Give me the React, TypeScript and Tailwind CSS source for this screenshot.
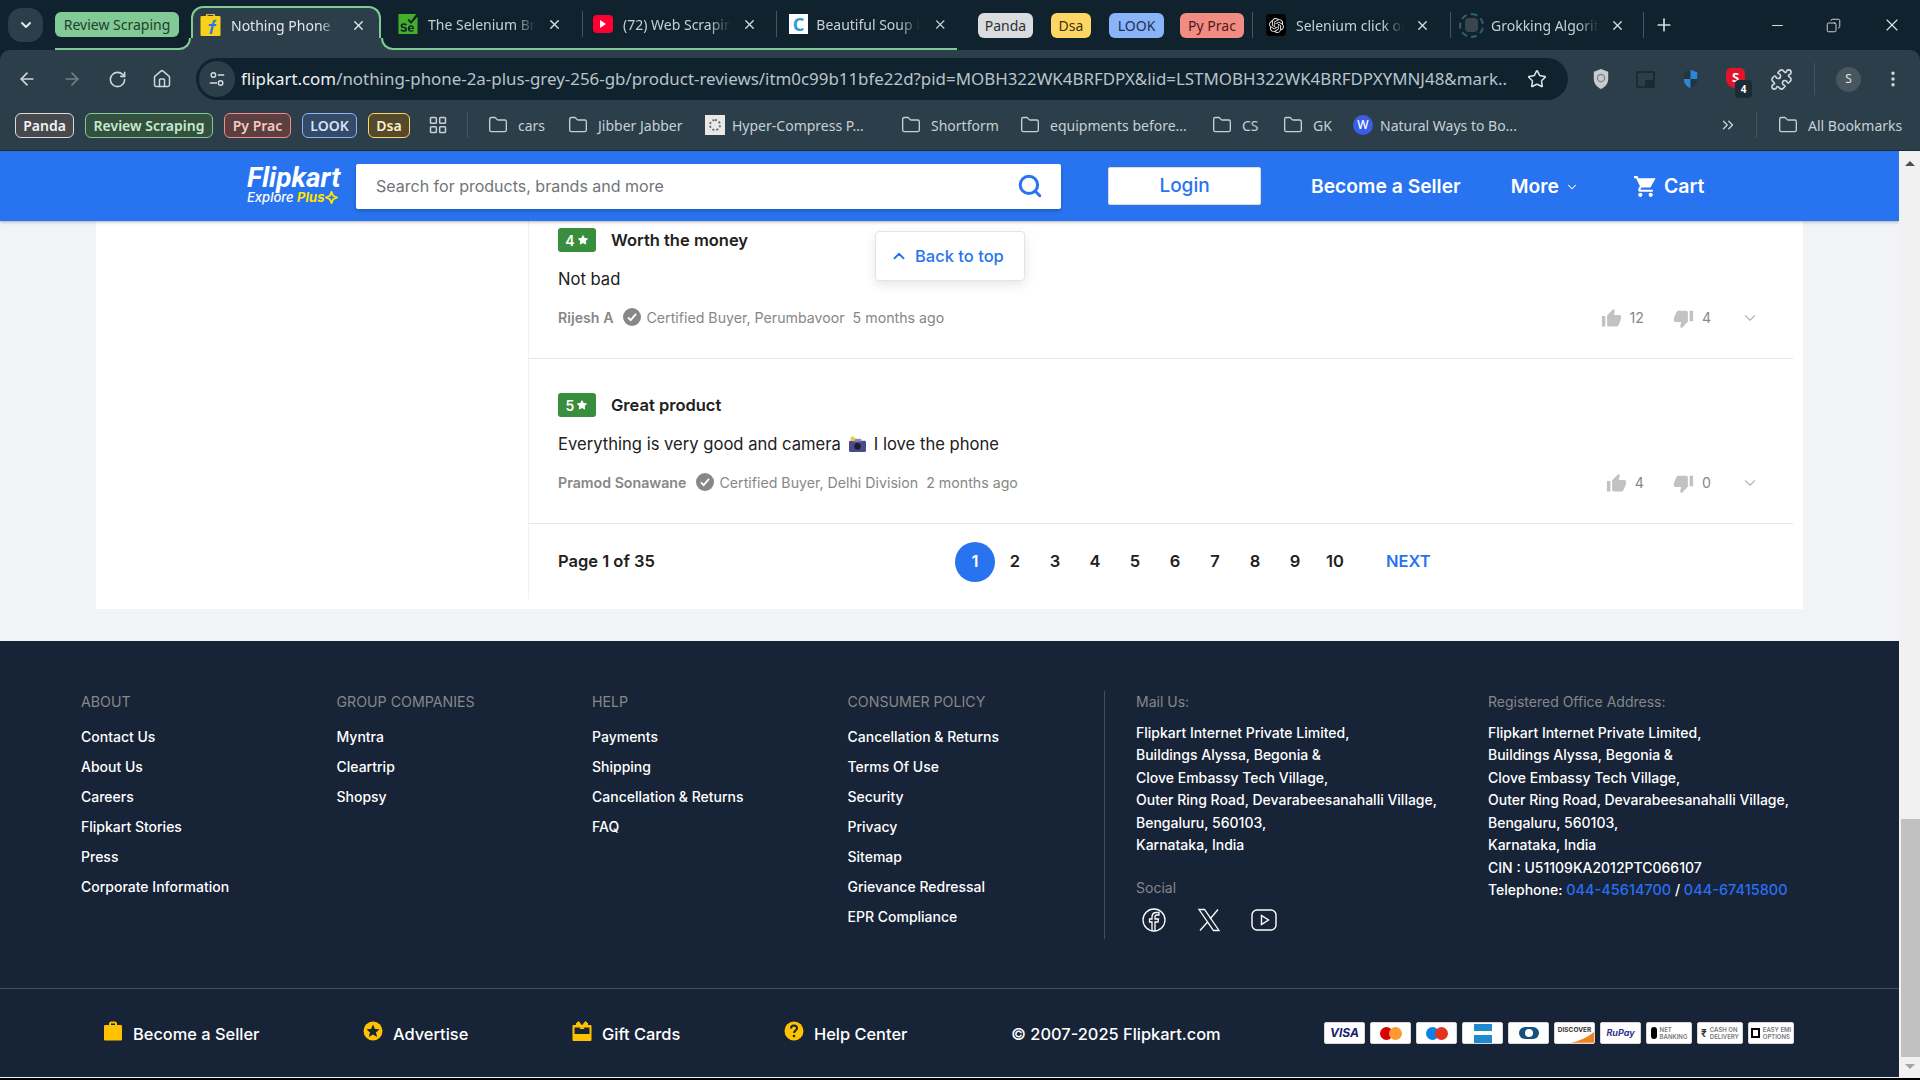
import {
  ArrowLeft,
  ArrowRight,
  ChevronDown,
  ChevronUp,
  ChevronsRight,
  Copy,
  EllipsisVertical,
  Folder,
  House,
  LayoutGrid,
  Minus,
  Plus,
  Puzzle,
  RotateCw,
  Search,
  Star,
  X,
} from 'lucide-react';
import { SiOpenai, SiSelenium } from 'react-icons/si';
import type { ReactNode } from 'react';

const aboutLinks = ['Contact Us', 'About Us', 'Careers', 'Flipkart Stories', 'Press', 'Corporate Information'];
const groupLinks = ['Myntra', 'Cleartrip', 'Shopsy'];
const helpLinks = ['Payments', 'Shipping', 'Cancellation & Returns', 'FAQ'];
const policyLinks = ['Cancellation & Returns', 'Terms Of Use', 'Security', 'Privacy', 'Sitemap', 'Grievance Redressal', 'EPR Compliance'];
const addressLines = [
  'Flipkart Internet Private Limited,',
  'Buildings Alyssa, Begonia &',
  'Clove Embassy Tech Village,',
  'Outer Ring Road, Devarabeesanahalli Village,',
  'Bengaluru, 560103,',
  'Karnataka, India',
];

function Tab({ icon, title, width }: { icon: ReactNode; title: string; width: string }) {
  return (
    <div className={`flex items-center h-[34px] shrink-0 pl-[10px] ${width}`}>
      <span className="w-5 h-5 shrink-0 flex items-center justify-center">{icon}</span>
      <span className="ml-[10px] w-[108px] overflow-hidden whitespace-nowrap text-[14px] text-[#c7d0d6] [mask-image:linear-gradient(90deg,#000_80%,transparent)]">
        {title}
      </span>
      <X size={15} strokeWidth={2.2} className="ml-[11px] text-[#d5dce0]" />
      <span className="ml-auto h-[26px] w-px bg-[#45545f]" />
    </div>
  );
}

function GroupChip({ label, className }: { label: string; className: string }) {
  return (
    <span className={`h-[25px] flex items-center justify-center rounded-md text-[14px] shrink-0 ${className}`}>{label}</span>
  );
}

function BookmarkChip({ label, className }: { label: string; className: string }) {
  return (
    <span className={`h-[25px] flex items-center justify-center rounded-md border text-[14px] font-semibold shrink-0 ${className}`}>
      {label}
    </span>
  );
}

function FolderMark({ label, className }: { label: string; className: string }) {
  return (
    <div className={`flex items-center shrink-0 ${className}`}>
      <Folder size={20} strokeWidth={1.6} className="text-[#c7d0d6]" />
      <span className="ml-[10px] text-[14px] text-[#c7d0d6] whitespace-nowrap">{label}</span>
    </div>
  );
}

function ThumbUp() {
  return (
    <svg viewBox="0 0 24 24" className="w-[21px] h-[21px] fill-[#c2c2c2]">
      <path d="M1 21h4V9H1v12zm22-11c0-1.1-.9-2-2-2h-6.31l.95-4.57.03-.32c0-.41-.17-.79-.44-1.06L14.17 1 7.59 7.59C7.22 7.95 7 8.45 7 9v10c0 1.1.9 2 2 2h9c.83 0 1.54-.5 1.84-1.22l3.02-7.05c.09-.23.14-.47.14-.73v-2z" />
    </svg>
  );
}

function ThumbDown() {
  return (
    <svg viewBox="0 0 24 24" className="w-[21px] h-[21px] fill-[#c2c2c2]">
      <path d="M15 3H6c-.83 0-1.54.5-1.84 1.22l-3.02 7.05c-.09.23-.14.47-.14.73v2c0 1.1.9 2 2 2h6.31l-.95 4.57-.03.32c0 .41.17.79.44 1.06L9.83 23l6.59-6.59c.36-.36.58-.86.58-1.41V5c0-1.1-.9-2-2-2zm4 0v12h4V3h-4z" />
    </svg>
  );
}

function Review({
  rating,
  title,
  body,
  author,
  place,
  ago,
  up,
  down,
}: {
  rating: number;
  title: string;
  body: ReactNode;
  author: string;
  place: string;
  ago: string;
  up: number;
  down: number;
}) {
  return (
    <div className="pl-[29px] pr-[34px] border-b border-[#e8e8e8]">
      <div className="flex items-center h-6">
        <span className="w-[38px] h-6 bg-[#388e3c] rounded-[3px] text-white text-[14px] font-semibold flex items-center justify-center gap-[2px]">
          {rating}
          <Star size={12} fill="white" strokeWidth={0} />
        </span>
        <span className="ml-[15px] text-[16.5px] font-semibold text-[#212121]">{title}</span>
      </div>
      <div className="mt-[15px] h-6 flex items-center text-[16.6px] text-[#212121]">{body}</div>
      <div className="mt-[17px] h-5 flex items-center text-[14.2px] text-[#878787]">
        <span className="font-semibold">{author}</span>
        <svg viewBox="0 0 20 20" className="w-[18px] h-[18px] ml-[10px] mb-[3px]">
          <circle cx="10" cy="10" r="10" fill="#878787" />
          <path d="M5.5 10.5l3 3 6-7" fill="none" stroke="white" strokeWidth="2" />
        </svg>
        <span className="ml-[5px]">Certified Buyer, {place}</span>
        <span className="ml-2">{ago}</span>
        <div className="ml-auto flex items-center">
          <ThumbUp />
          <span className="ml-[8px] mr-[29px]">{up}</span>
          <ThumbDown />
          <span className="ml-[8px] w-[39px]">{down}</span>
          <ChevronDown size={18} strokeWidth={1.5} className="text-[#b5b5b5]" />
        </div>
      </div>
      <div className="h-[30px]" />
    </div>
  );
}

function LinkColumn({ heading, links }: { heading: string; links: string[] }) {
  return (
    <div>
      <div className="h-5 text-[14.2px] leading-5 text-[#878787] mb-[15px]">{heading}</div>
      {links.map((l) => (
        <div key={l} className="h-5 mb-[10px] text-[14px] leading-5 font-medium text-white">
          {l}
        </div>
      ))}
    </div>
  );
}

function PayCard({ children, className = 'w-[41px]' }: { children: ReactNode; className?: string }) {
  return (
    <div className={`relative h-[22px] bg-white rounded-[2px] border border-[#d8d8d8] flex items-center justify-center overflow-hidden shrink-0 ${className}`}>
      {children}
    </div>
  );
}

function PayText({ icon, top, bottom }: { icon: ReactNode; top: string; bottom: string }) {
  return (
    <PayCard className="w-[46px]">
      {icon}
      <span className="ml-[3px] text-[6px] leading-[7px] font-semibold text-[#777]">
        {top}
        <br />
        {bottom}
      </span>
    </PayCard>
  );
}

function BottomItem({ icon, label, className }: { icon: ReactNode; label: string; className: string }) {
  return (
    <div className={`flex items-center shrink-0 ${className}`}>
      <span className="w-5 h-5 mb-[3px] flex items-center justify-center">{icon}</span>
      <span className="ml-[10px] pt-[2px] text-[16.4px] font-medium text-white">{label}</span>
    </div>
  );
}

export default function App() {
  return (
    <div className="w-[1920px] h-screen overflow-hidden bg-black flex flex-col font-['Inter',sans-serif]">
      {/* browser tab strip */}
      <div className="h-[50px] bg-[#10222e] flex items-center pl-2 shrink-0 font-['Noto_Sans',sans-serif]">
        <span className="w-[35px] h-[34px] rounded-[14px] bg-[#2c3e4a] flex items-center justify-center">
          <ChevronDown size={16} strokeWidth={3} className="text-[#e3e8eb]" />
        </span>
        <div className="ml-3 w-[902px] h-full flex items-center border-b-2 border-[#81c995] shrink-0">
          <GroupChip label="Review Scraping" className="w-[124px] bg-[#81c995] text-[#23402c]" />
          <div className="relative ml-[12px] h-[44px] mb-[-2px] self-end w-[190px] bg-[#2c3e4a] border-2 border-b-0 border-[#81c995] rounded-t-[12px] flex items-center pl-[7px] pb-[8px]">
            <span className="absolute left-[-14px] bottom-0 w-[14px] h-[12px] bg-[#2c3e4a]" />
            <span className="absolute left-[-14px] bottom-0 w-[12px] h-[12px] bg-[#10222e] border-r-2 border-b-2 border-[#81c995] rounded-br-[12px]" />
            <span className="absolute right-[-14px] bottom-0 w-[14px] h-[12px] bg-[#2c3e4a]" />
            <span className="absolute right-[-14px] bottom-0 w-[12px] h-[12px] bg-[#10222e] border-l-2 border-b-2 border-[#81c995] rounded-bl-[12px]" />
            <svg viewBox="0 0 20 22" className="w-[21px] h-[22px]">
              <rect x="0" y="2" width="20" height="20" rx="1" fill="#f8d11a" />
              <path d="M6 2a4 2 0 0 1 8 0" fill="none" stroke="#f8d11a" strokeWidth="1.5" />
              <path d="M9 20l2-8H8l.6-2h3l.6-2.5c.4-1.4 1.6-2 3.8-1.8l-.3 1.8c-1 0-1.5.2-1.7 1l-.2 1.5H16l-.5 2h-2.2L11.5 20z" fill="#2874f0" />
            </svg>
            <span className="ml-[10px] w-[105px] overflow-hidden whitespace-nowrap text-[14px] text-[#e3e8eb] [mask-image:linear-gradient(90deg,#000_85%,transparent)]">
              Nothing Phone 2a
            </span>
            <X size={15} strokeWidth={2.2} className="ml-[15px] text-[#e3e8eb]" />
          </div>
          <div className="flex items-center ml-[7px]">
            <Tab width="w-[195px]" title="The Selenium Browser" icon={<SiSelenium size={20} className="text-[#43b02a]" />} />
            <Tab
              width="w-[194px]"
              title="(72) Web Scraping"
              icon={
                <span className="w-5 h-[18px] bg-[#ff0033] rounded-[4px] flex items-center justify-center">
                  <span className="w-0 h-0 border-y-[4px] border-y-transparent border-l-[6px] border-l-white" />
                </span>
              }
            />
            <div className="flex items-center h-[34px] pl-[12px] w-[170px] shrink-0">
              <span className="w-5 h-5 bg-white text-[#2f9bd6] text-[18px] font-bold flex items-center justify-center">C</span>
              <span className="ml-[8px] w-[107px] overflow-hidden whitespace-nowrap text-[14px] text-[#c7d0d6] [mask-image:linear-gradient(90deg,#000_80%,transparent)]">
                Beautiful Soup Documentation
              </span>
              <X size={15} strokeWidth={2.2} className="ml-[13px] text-[#d5dce0]" />
            </div>
          </div>
        </div>
        <GroupChip label="Panda" className="ml-[21px] w-[55px] bg-[#dadce0] text-[#2d3134]" />
        <GroupChip label="Dsa" className="ml-[18px] w-[40px] bg-[#fdd663] text-[#3d3410]" />
        <GroupChip label="LOOK" className="ml-[18px] w-[55px] bg-[#8ab4f8] text-[#1a2f52]" />
        <GroupChip label="Py Prac" className="ml-[16px] w-[64px] bg-[#f28b82] text-[#4a1d1a]" />
        <span className="ml-2 h-[26px] w-px bg-[#45545f]" />
        <div className="ml-[3px] flex items-center">
          <Tab
            width="w-[195px]"
            title="Selenium click on element"
            icon={
              <span className="w-5 h-[22px] bg-black rounded-[4px] flex items-center justify-center">
                <SiOpenai size={15} className="text-[#e5e5e5]" />
              </span>
            }
          />
          <Tab
            width="w-[193px]"
            title="Grokking Algorithms"
            icon={
              <span className="w-[25px] h-[25px] shrink-0 rounded-full border-2 border-dashed border-[#2d6070] flex items-center justify-center">
                <span className="w-[13px] h-[14px] bg-[#39464f] rounded-sm" />
              </span>
            }
          />
        </div>
        <Plus size={20} strokeWidth={2} className="ml-[10px] text-[#d5dce0]" />
        <Minus size={17} strokeWidth={1.5} className="ml-[95px] text-[#d5dce0]" />
        <Copy size={15} strokeWidth={1.5} className="ml-[40px] text-[#d5dce0] -scale-x-100" />
        <X size={20} strokeWidth={1.3} className="ml-[41px] text-[#e3e8eb]" />
      </div>

      {/* browser toolbar + bookmarks */}
      <div className="h-[101px] shrink-0 bg-[#10222e]">
        <div className="h-full bg-[#2c3e4a] rounded-t-[10px] border-b border-[#1d2c37] font-['Noto_Sans',sans-serif]">
          <div className="h-[50px] flex items-center pl-[17px] pt-2">
            <ArrowLeft size={20} strokeWidth={2} className="text-[#cfd7dc]" />
            <ArrowRight size={20} strokeWidth={2} className="ml-[25px] text-[#71808a]" />
            <RotateCw size={19} strokeWidth={2} className="ml-[26px] text-[#cfd7dc]" />
            <House size={20} strokeWidth={1.8} className="ml-[25px] text-[#cfd7dc]" />
            <div className="ml-[24px] w-[1372px] h-[42px] bg-[#10222e] rounded-full flex items-center shrink-0">
              <span className="ml-[3px] w-[36px] h-[36px] rounded-full bg-[#2c3e4a] flex items-center justify-center">
                <svg viewBox="0 0 20 20" className="w-[18px] h-[18px] stroke-[#d5dce0] fill-none" strokeWidth="1.6">
                  <circle cx="6" cy="5.5" r="2.5" />
                  <path d="M11 5.5h7M2 14.5h8" />
                  <circle cx="14" cy="14.5" r="2.5" />
                </svg>
              </span>
              <span className="ml-[6px] w-[1267px] whitespace-nowrap overflow-hidden text-[16.9px] text-[#b9c3ca]">
                <span className="text-[#eef1f3]">flipkart.com</span>/nothing-phone-2a-plus-grey-256-gb/product-reviews/itm0c99b11bfe22d?pid=MOBH322WK4BRFDPX&amp;lid=LSTMOBH322WK4BRFDPXYMNJ48&amp;mark...
              </span>
              <Star size={20} strokeWidth={1.8} className="ml-[19px] text-[#dfe4e7]" />
            </div>
            <svg viewBox="0 0 20 24" className="ml-[24px] w-[18px] h-[22px]">
              <path d="M10 1l8 3v8c0 5-3.5 9-8 11-4.5-2-8-6-8-11V4z" fill="#c7ccd0" />
              <circle cx="10" cy="11" r="4" fill="none" stroke="#7d8a92" strokeWidth="1.5" />
            </svg>
            <span className="ml-[26px] relative w-[19px] h-[17px] border-2 border-[#1c2a33] rounded-[2px] flex items-end justify-end">
              <span className="w-2 h-[6px] bg-[#1c2a33]" />
            </span>
            <svg viewBox="0 0 20 24" className="ml-[27px] w-[17px] h-[22px]">
              <path d="M10 1l8 3v8c0 5-3.5 9-8 11-4.5-2-8-6-8-11V4z" fill="#243540" />
              <path d="M10 1l8 3v8h-8zM10 12H2c0 5 3.5 9 8 11z" fill="#2a86d6" />
            </svg>
            <span className="ml-[27px] relative w-5 h-[22px]">
              <span className="absolute left-0 top-0 w-[19px] h-[20px] bg-[#e3132a] rounded-t-[5px] rounded-b-[9px] text-white text-[13px] font-bold leading-[19px] text-center">
                S
              </span>
              <span className="absolute left-[9px] top-[12px] w-[17px] h-[18px] bg-[#1c2a33] rounded-[4px] text-white text-[10px] font-bold leading-[18px] text-center">
                4
              </span>
            </span>
            <Puzzle size={23} strokeWidth={1.7} className="ml-[24px] text-[#cfd7dc]" />
            <span className="ml-[21px] h-[32px] w-px bg-[#45545f]" />
            <span className="ml-[21px] w-[25px] h-[25px] rounded-full bg-[#47565f] text-[#dfe4e7] text-[12px] flex items-center justify-center">S</span>
            <EllipsisVertical size={20} strokeWidth={2.2} className="ml-[22px] text-[#cfd7dc]" />
          </div>
          <div className="h-[50px] flex items-center pl-[15px]">
            <BookmarkChip label="Panda" className="w-[59px] bg-[#47494d] border-[#dadce0] text-[#f1f3f4]" />
            <BookmarkChip label="Review Scraping" className="ml-[11px] w-[128px] bg-[#34503f] border-[#81c995] text-[#c5eccf]" />
            <BookmarkChip label="Py Prac" className="ml-[11px] w-[67px] bg-[#5c3f40] border-[#f28b82] text-[#f8c7c2]" />
            <BookmarkChip label="LOOK" className="ml-[11px] w-[55px] bg-[#344a66] border-[#8ab4f8] text-[#d2e3fc]" />
            <BookmarkChip label="Dsa" className="ml-[11px] w-[42px] bg-[#55492c] border-[#fdd663] text-[#feefc3]" />
            <LayoutGrid size={20} strokeWidth={1.8} className="ml-[18px] text-[#c7d0d6]" />
            <span className="ml-[19px] mr-[20px] h-[26px] w-px bg-[#45545f]" />
            <FolderMark label="cars" className="w-[80px]" />
            <FolderMark label="Jibber Jabber" className="w-[137px]" />
            <div className="w-[196px] flex items-center shrink-0">
              <span className="w-5 h-5 bg-[#e8e8e8] flex items-center justify-center">
                <span className="w-3 h-3 rounded-full border-2 border-dotted border-[#666]" />
              </span>
              <span className="ml-[7px] text-[14px] text-[#c7d0d6] whitespace-nowrap">Hyper-Compress P...</span>
            </div>
            <FolderMark label="Shortform" className="w-[119px]" />
            <FolderMark label="equipments before..." className="w-[192px]" />
            <FolderMark label="CS" className="w-[71px]" />
            <FolderMark label="GK" className="w-[70px]" />
            <div className="w-[366px] flex items-center shrink-0">
              <span className="w-5 h-5 rounded-full bg-[#3a5ee8] text-white text-[12px] font-medium flex items-center justify-center">W</span>
              <span className="ml-[7px] text-[14px] text-[#c7d0d6] whitespace-nowrap">Natural Ways to Bo...</span>
            </div>
            <ChevronsRight size={18} strokeWidth={1.8} className="text-[#c7d0d6]" />
            <span className="ml-[19px] mr-[21px] h-[26px] w-px bg-[#45545f]" />
            <FolderMark label="All Bookmarks" className="" />
          </div>
        </div>
      </div>

      {/* page + scrollbar */}
      <div className="h-[927px] flex shrink-0">
        <div className="relative w-[1899px] h-full bg-[#f1f3f6] overflow-hidden shrink-0">
          <header className="relative z-10 h-[70px] bg-[#2874f0] shadow-[0_1px_3px_rgba(0,0,0,0.3)] flex items-center pl-[247px]">
            <div className="w-[109px] h-[44px] flex flex-col text-white italic leading-none">
              <span className="text-[28px] font-bold font-['Roboto',sans-serif] leading-[27px]">Flipkart</span>
              <span className="flex items-center text-[13px] font-medium">
                Explore&nbsp;<span className="text-[#ffe500] font-bold">Plus</span>
                <svg viewBox="0 0 14 14" className="w-[13px] h-[13px] ml-[1px] fill-none stroke-[#ffe500]" strokeWidth="2">
                  <path d="M7 1l1.8 4.2L13 7l-4.2 1.8L7 13l-1.8-4.2L1 7l4.2-1.8z" />
                </svg>
              </span>
            </div>
            <div className="w-[705px] h-[45px] bg-white rounded-[2px] shadow-[0_2px_4px_rgba(0,0,0,0.23)] flex items-center pl-5 pr-[18px]">
              <span className="text-[16px] text-[#717478]">Search for products, brands and more</span>
              <Search size={26} strokeWidth={2.8} className="ml-auto text-[#2874f0]" />
            </div>
            <div className="ml-[47px] w-[153px] h-[38px] bg-white border border-[#dbdbdb] rounded-[2px] flex items-center justify-center text-[19px] font-medium text-[#2874f0]">
              Login
            </div>
            <span className="ml-[50px] mt-[2px] text-[19.3px] leading-none font-semibold text-white">Become a Seller</span>
            <span className="ml-[50px] mt-[2px] text-[19.3px] leading-none font-semibold text-white">More</span>
            <ChevronDown size={14} strokeWidth={1.8} className="ml-[6px] mt-[2px] text-white" />
            <svg viewBox="0 0 24 24" className="ml-[54px] w-[25px] h-[25px] fill-white">
              <path d="M7 18c-1.1 0-1.99.9-1.99 2S5.9 22 7 22s2-.9 2-2-.9-2-2-2zM1 2v2h2l3.6 7.59-1.35 2.45c-.16.28-.25.61-.25.96 0 1.1.9 2 2 2h12v-2H7.42c-.14 0-.25-.11-.25-.25l.03-.12.9-1.63h7.45c.75 0 1.41-.41 1.75-1.03L21.7 4H5.21l-.94-2H1zm16 16c-1.1 0-1.99.9-1.99 2s.89 2 1.99 2 2-.9 2-2-.9-2-2-2z" />
            </svg>
            <span className="ml-[6px] mt-[2px] text-[19.5px] leading-none font-semibold text-white">Cart</span>
          </header>

          <div className="absolute z-20 left-[875px] top-[80px] w-[150px] h-[50px] bg-white border border-[#e4e4e4] rounded-[4px] shadow-[0_4px_12px_rgba(0,0,0,0.1)] flex items-center pl-[14px] text-[16.5px] font-medium text-[#2874f0]">
            <ChevronUp size={18} strokeWidth={2.4} />
            <span className="ml-[7px]">Back to top</span>
          </div>

          {/* review card */}
          <div className="ml-[96px] w-[1707px] h-[388px] bg-white pl-[432px] pr-[10px]">
            <div className="h-[378px] border-l border-[#f0f0f0] pt-[7px]">
              <Review
                rating={4}
                title="Worth the money"
                body="Not bad"
                author="Rijesh A"
                place="Perumbavoor"
                ago="5 months ago"
                up={12}
                down={4}
              />
              <div className="h-[34px]" />
              <Review
                rating={5}
                title="Great product"
                body={
                  <>
                    Everything is very good and camera
                    <svg viewBox="0 0 20 18" className="w-[19px] h-[17px] mx-[7px]">
                      <rect x="1" y="5" width="18" height="12" rx="1.5" fill="#4c4a8a" />
                      <rect x="5" y="3" width="9" height="3" fill="#8b88b8" />
                      <circle cx="10" cy="11" r="3.5" fill="#1d1d33" />
                      <circle cx="5" cy="3" r="2.5" fill="#f6c544" />
                    </svg>
                    I love the phone
                  </>
                }
                author="Pramod Sonawane"
                place="Delhi Division"
                ago="2 months ago"
                up={4}
                down={0}
              />
              <div className="h-[75px] pl-[29px] flex items-center text-[16.5px] font-semibold text-[#212121]">
                <span className="w-[397px]">Page 1 of 35</span>
                <div className="flex items-center">
                  <span className="w-10 h-10 rounded-full bg-[#2874f0] text-white flex items-center justify-center">1</span>
                  {[2, 3, 4, 5, 6, 7, 8, 9, 10].map((n) => (
                    <span key={n} className="w-10 text-center">
                      {n}
                    </span>
                  ))}
                </div>
                <span className="ml-[31px] font-semibold text-[#2874f0]">NEXT</span>
              </div>
            </div>
          </div>

          {/* footer */}
          <footer className="mt-8 h-[436px] bg-[#172337] pt-[51px]">
            <div className="flex pl-[81px] h-[247px]">
              <div className="grid grid-cols-[repeat(4,255.5px)] w-[1023px] shrink-0">
                <LinkColumn heading="ABOUT" links={aboutLinks} />
                <LinkColumn heading="GROUP COMPANIES" links={groupLinks} />
                <LinkColumn heading="HELP" links={helpLinks} />
                <LinkColumn heading="CONSUMER POLICY" links={policyLinks} />
              </div>
              <div className="border-l border-[#454d5e] pl-[31px] w-[384px] shrink-0 -mt-px">
                <div className="h-5 text-[14px] leading-5 mt-px text-[#878787] mb-[9.5px]">Mail Us:</div>
                {addressLines.map((l) => (
                  <div key={l} className="h-[22.5px] text-[14px] leading-[22.5px] font-medium text-white whitespace-nowrap">
                    {l}
                  </div>
                ))}
                <div className="h-5 mt-[21px] text-[14px] leading-5 text-[#878787]">Social</div>
                <div className="flex items-center mt-[10px]">
                  <svg viewBox="0 0 24 24" className="ml-[6px] w-6 h-6 fill-none stroke-white" strokeWidth="1.3">
                    <circle cx="12" cy="12" r="11" />
                    <path d="M13 23v-9h3l.5-3H13V9c0-1 .5-2 2-2h2V4.5h-2.5C11.8 4.5 10 6 10 9v2H7.5v3H10v9" />
                  </svg>
                  <svg viewBox="0 0 24 24" className="ml-[31px] w-6 h-6 fill-none stroke-white" strokeWidth="1.3">
                    <path d="M2 1.5h5.5L22 22.5h-5.5zM21 1.5 13 11M11 13.5l-8 9" />
                  </svg>
                  <svg viewBox="0 0 26 22" className="ml-[30px] w-[26px] h-[22px] fill-none stroke-white" strokeWidth="1.4">
                    <rect x="1" y="1" width="24" height="20" rx="5" />
                    <path d="M10.5 6.5v9l7-4.5z" />
                  </svg>
                </div>
              </div>
              <div className="w-[411px] shrink-0 -mt-px">
                <div className="h-5 text-[14px] leading-5 mt-px text-[#878787] mb-[9.5px]">Registered Office Address:</div>
                {addressLines.map((l) => (
                  <div key={l} className="h-[22.5px] text-[14px] leading-[22.5px] font-medium text-white whitespace-nowrap">
                    {l}
                  </div>
                ))}
                <div className="h-[22.5px] text-[14px] leading-[22.5px] font-medium text-white">CIN : U51109KA2012PTC066107</div>
                <div className="h-[22.5px] text-[14px] leading-[22.5px] font-medium text-white">
                  Telephone: <span className="text-[14.5px] text-[#2a6ff0]">044-45614700</span> / <span className="text-[14.5px] text-[#2a6ff0]">044-67415800</span>
                </div>
              </div>
            </div>
            <div className="mt-[49px] h-[89px] border-t border-[#454d5e] flex items-center pl-[103px]">
              <BottomItem
                className="w-[260px]"
                label="Become a Seller"
                icon={
                  <svg viewBox="0 0 20 20" className="w-5 h-5 fill-[#ffc200]">
                    <path d="M6 4V2.5C6 1.5 7 .5 8 .5h4c1 0 2 1 2 2V4h3.5c1 0 1.5.5 1.5 1.5V18c0 1-.5 1.5-1.5 1.5h-15C1.5 19.5 1 19 1 18V5.5C1 4.5 1.5 4 2.5 4zm2 0h4V2.5H8z" />
                  </svg>
                }
              />
              <BottomItem
                className="w-[209px]"
                label="Advertise"
                icon={
                  <svg viewBox="0 0 20 20" className="w-5 h-5">
                    <circle cx="10" cy="10" r="9.5" fill="#ffc200" />
                    <path d="M10 3.5l1.9 4.4 4.6.4-3.5 3.1 1.1 4.6L10 13.5 5.9 16l1.1-4.6-3.5-3.1 4.6-.4z" fill="#172337" />
                  </svg>
                }
              />
              <BottomItem
                className="w-[212px]"
                label="Gift Cards"
                icon={
                  <svg viewBox="0 0 20 20" className="w-5 h-5">
                    <rect x="0.5" y="4" width="19" height="16" rx="1" fill="#ffc200" />
                    <path d="M2.5 6.5h15V13h-15z" fill="#172337" />
                    <path d="M10 5L6.5.5 4 3l2 2zM10 5l3.5-4.5L16 3l-2 2zM8 8l2-3 2 3" fill="#ffc200" stroke="#ffc200" />
                  </svg>
                }
              />
              <BottomItem
                className="w-[227px]"
                label="Help Center"
                icon={
                  <svg viewBox="0 0 20 20" className="w-5 h-5">
                    <circle cx="10" cy="10" r="9.5" fill="#ffc200" />
                    <path d="M7 7.5C7 5.5 8.5 4.5 10 4.5s3 1 3 2.8c0 2.2-3 2.2-3 4.7" fill="none" stroke="#172337" strokeWidth="2" />
                    <circle cx="10" cy="15" r="1.3" fill="#172337" />
                  </svg>
                }
              />
              <span className="w-[313px] shrink-0 pt-[2px] text-[16.4px] font-medium text-white">© 2007-2025 Flipkart.com</span>
              <div className="flex items-center gap-[5px]">
                <PayCard>
                  <span className="text-[12px] font-bold italic text-[#1a1f71]">VISA</span>
                </PayCard>
                <PayCard>
                  <span className="w-[13px] h-[13px] rounded-full bg-[#d80000]" />
                  <span className="w-[13px] h-[13px] rounded-full bg-[#ff9a33] -ml-1" />
                </PayCard>
                <PayCard>
                  <span className="w-[13px] h-[13px] rounded-full bg-[#0a84e0]" />
                  <span className="w-[13px] h-[13px] rounded-full bg-[#e6331f] -ml-1" />
                </PayCard>
                <PayCard>
                  <span className="w-[18px] h-[19px] bg-[#1f8ad0] flex items-center">
                    <span className="w-full h-[4px] bg-white" />
                  </span>
                </PayCard>
                <PayCard>
                  <span className="w-[20px] h-3 rounded-full bg-[#16507e] flex items-center justify-center">
                    <span className="w-2 h-2 rounded-full bg-white" />
                  </span>
                </PayCard>
                <PayCard>
                  <svg viewBox="0 0 40 20" className="absolute inset-0 w-full h-full">
                    <path d="M16 20C26 18 34 14 40 9v11z" fill="#f48120" />
                  </svg>
                  <span className="relative mb-[5px] text-[6.5px] font-bold text-[#333]">DISCOVER</span>
                </PayCard>
                <PayCard>
                  <span className="text-[9px] font-bold italic text-[#33348e]">RuPay</span>
                </PayCard>
                <PayText top="NET" bottom="BANKING" icon={<span className="w-[6px] h-[12px] bg-black rounded-full" />} />
                <PayText top="CASH ON" bottom="DELIVERY" icon={<span className="text-[10px] font-bold text-[#333]">₹</span>} />
                <PayText top="EASY EMI" bottom="OPTIONS" icon={<span className="w-[9px] h-[10px] border-2 border-black" />} />
              </div>
            </div>
          </footer>
        </div>

        <div className="w-[21px] h-full bg-[#f1f1f1] flex flex-col items-center shrink-0">
          <span className="mt-[10px] w-0 h-0 border-x-[5px] border-x-transparent border-b-[5px] border-b-[#505050]" />
          <span className="mt-[653px] w-[19px] h-[238px] ml-px bg-[#c1c1c1]" />
          <span className="mt-[7px] w-0 h-0 border-x-[5px] border-x-transparent border-t-[5px] border-t-[#a3a3a3]" />
        </div>
      </div>
    </div>
  );
}
